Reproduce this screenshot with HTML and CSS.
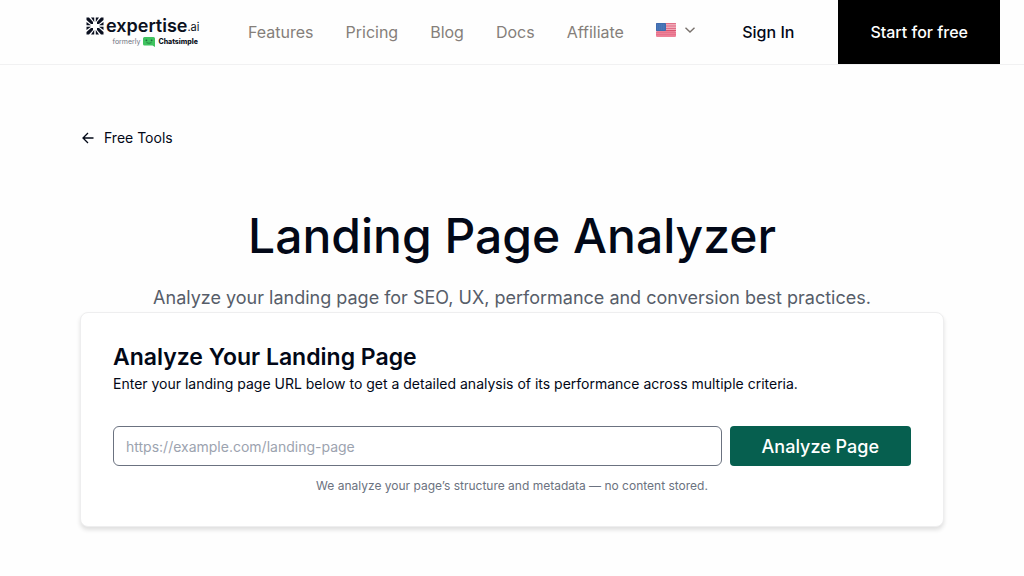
FILE: index.html
```html
<!DOCTYPE html>
<html lang="en">
<head>
    <meta charset="UTF-8">
    <meta name="viewport" content="width=device-width, initial-scale=1.0">
    <title>Landing Page Analyzer</title>
    <link rel="stylesheet" href="styles.css">
</head>
<body>
    <header class="header">
        <a class="logo" href="#">
            <span class="logo-main">
                <svg class="logo-mark" viewBox="0 0 18 18" aria-hidden="true">
                    <g fill="#0b1020">
                        <path d="M.5.5H3l4 4.500V7H5L.5 3z"/>
                        <path d="M17.500.5H15l-4 4.500V7h2l4.500-4z"/>
                        <path d="M.5 17.500H3l4-4.500v-2H5L.5 15z"/>
                        <path d="M17.500 17.500H15l-4-4.500v-2h2l4.500 4z"/>
                        <path d="M5 .5h3.200V5zM13 .5H9.800V5zM5 17.500h3.200V13zM13 17.500H9.800V13z"/>
                        <path d="M.5 5v3.200H5zM.5 13V9.800H5zM17.500 5v3.200H13zM17.500 13V9.800H13z"/>
                    </g>
                </svg>
                <span class="logo-name">expertise</span><span class="logo-tld">.ai</span>
            </span>
            <span class="logo-sub">
                <span class="logo-formerly">formerly</span>
                <svg class="logo-bot" viewBox="0 0 12 10" aria-hidden="true">
                    <path d="M1.500 0h9A1.500 1.500 0 0 1 12 1.500V10L9.500 8.500h-8A1.500 1.500 0 0 1 0 7V1.500A1.500 1.500 0 0 1 1.500 0z" fill="#3fc35f"/>
                    <circle cx="3.400" cy="3.300" r=".9" fill="#1c6b38"/>
                    <circle cx="8.600" cy="3.300" r=".9" fill="#1c6b38"/>
                    <path d="M3.500 5.600q2.500 1.400 5 0" stroke="#1c6b38" fill="none" stroke-width=".7"/>
                </svg>
                <span class="logo-old">Chatsimple</span>
            </span>
        </a>
        <nav class="nav">
            <a href="#">Features</a>
            <a href="#">Pricing</a>
            <a href="#">Blog</a>
            <a href="#">Docs</a>
            <a href="#">Affiliate</a>
            <button class="lang" type="button" aria-label="Language">
                <svg class="flag" viewBox="0 0 20 14" aria-hidden="true">
                    <rect width="20" height="14" rx="1.500" fill="#f7c6d0"/>
                    <path d="M0 .8h20M0 3h20M0 5.200h20M0 7.400h20" stroke="#d9536f" stroke-width="1.100"/>
                    <rect y="8" width="20" height="6" rx="1.500" fill="#ee8298"/>
                    <path d="M0 9.400h20M0 11.600h20" stroke="#e5708a" stroke-width="1"/>
                    <rect width="10" height="8" rx="1" fill="#3d6cb0"/>
                    <path d="M1.500 2h8M1.500 4h8M1.500 6h8" stroke="#84a5d6" stroke-width=".8" stroke-dasharray=".8 1.200"/>
                </svg>
                <svg class="chevron" viewBox="0 0 10 6" aria-hidden="true">
                    <path d="M.5.8L5 5 9.500.8" fill="none" stroke="#78716c" stroke-width="1.400"/>
                </svg>
            </button>
        </nav>
        <div class="actions">
            <a class="sign-in" href="#">Sign In</a>
            <a class="start" href="#">Start for free</a>
        </div>
    </header>

    <main class="main">
        <a class="back" href="#">
            <svg class="arrow" viewBox="0 0 12 12" aria-hidden="true">
                <path d="M11.500 6H1.200M6 1L1 6l5 5" fill="none" stroke="#020817" stroke-width="1.300"/>
            </svg>
            Free Tools
        </a>
        <h1>Landing Page Analyzer</h1>
        <p class="intro">Analyze your landing page for SEO, UX, performance and conversion best practices.</p>

        <section class="card">
            <h2>Analyze Your Landing Page</h2>
            <label for="url">Enter your landing page URL below to get a detailed analysis of its performance across multiple criteria.</label>
            <form class="form">
                <input type="url" id="url" placeholder="https://example.com/landing-page">
                <button class="analyze" type="submit">Analyze Page</button>
            </form>
            <p class="note">We analyze your page’s structure and metadata — no content stored.</p>
        </section>
    </main>
</body>
</html>
```
FILE: styles.css
```css
* {
    box-sizing: border-box;
}

body {
    margin: 0;
    min-height: 100vh;
    font-family: Inter, "Liberation Sans", sans-serif;
    font-size: 16px;
    line-height: 24px;
    color: #020817;
    background-color: #fefefe;
}

h1, h2, p {
    margin: 0;
}

a {
    color: inherit;
    text-decoration: none;
}

button {
    font-family: inherit;
    border: none;
    cursor: pointer;
}

.header {
    display: flex;
    align-items: center;
    padding: 0 24px 0 86px;
    border-bottom: 1px solid #f1f1f2;
}

.logo {
    display: flex;
    flex-direction: column;
    width: 112px;
    margin-right: 50px;
    color: #0b1020;
}

.logo-main {
    display: flex;
    align-items: center;
    height: 20px;
}

.logo-mark {
    flex-shrink: 0;
    width: 18px;
    height: 18px;
    margin-right: 2px;
}

.logo-name {
    font-size: 18px;
    font-weight: 600;
}

.logo-tld {
    font-size: 11px;
    padding-top: 2px;
}

.logo-sub {
    display: flex;
    align-items: center;
    justify-content: flex-end;
    gap: 3px;
    height: 12px;
    font-size: 7px;
    line-height: 12px;
}

.logo-formerly {
    color: #6b7280;
}

.logo-bot {
    width: 12px;
    height: 10px;
}

.logo-old {
    font-weight: 800;
}

.nav {
    display: flex;
    align-items: center;
    gap: 32px;
    color: #857f7a;
}

.lang {
    display: flex;
    align-items: center;
    gap: 9px;
    padding: 0 0 4px;
    background: none;
}

.flag {
    width: 20px;
    height: 14px;
}

.chevron {
    width: 10px;
    height: 6px;
}

.actions {
    display: flex;
    align-items: center;
    gap: 44px;
    margin-left: auto;
    font-weight: 500;
}

.start {
    padding: 20px 32px;
    color: #fff;
    background-color: #000;
}

.main {
    max-width: 864px;
    margin: 0 auto;
    padding: 61px 0 48px;
}

.back {
    display: inline-flex;
    align-items: center;
    gap: 10px;
    padding-left: 2px;
    font-size: 14px;
}

.arrow {
    width: 12px;
    height: 12px;
}

h1 {
    margin-top: 56px;
    font-size: 48px;
    font-weight: 500;
    line-height: 60px;
    text-align: center;
}

.intro {
    margin-top: 18px;
    font-size: 18px;
    line-height: 28px;
    text-align: center;
    color: #565d69;
}

.card {
    padding: 28px 32px;
    background-color: #fff;
    border: 1px solid #eeeeef;
    border-radius: 8px;
    box-shadow: 0 3px 4px rgba(0, 0, 0, 0.12);
}

h2 {
    font-size: 23px;
    font-weight: 600;
    line-height: 32px;
}

.card label {
    display: block;
    font-size: 14px;
    line-height: 22px;
}

.form {
    display: flex;
    gap: 8px;
    margin-top: 31px;
}

.form input {
    flex: 1;
    min-width: 0;
    height: 40px;
    padding: 0 12px;
    font-family: inherit;
    font-size: 14px;
    background-color: #fff;
    border: 1px solid #6b7280;
    border-radius: 6px;
}

.form input::placeholder {
    color: #9ca3af;
}

.analyze {
    padding: 0 32px;
    font-size: 18px;
    font-weight: 500;
    color: #fff;
    background-color: #065f4f;
    border-radius: 4px;
}

.note {
    margin-top: 8px;
    font-size: 12px;
    text-align: center;
    color: #6b7280;
}
```
